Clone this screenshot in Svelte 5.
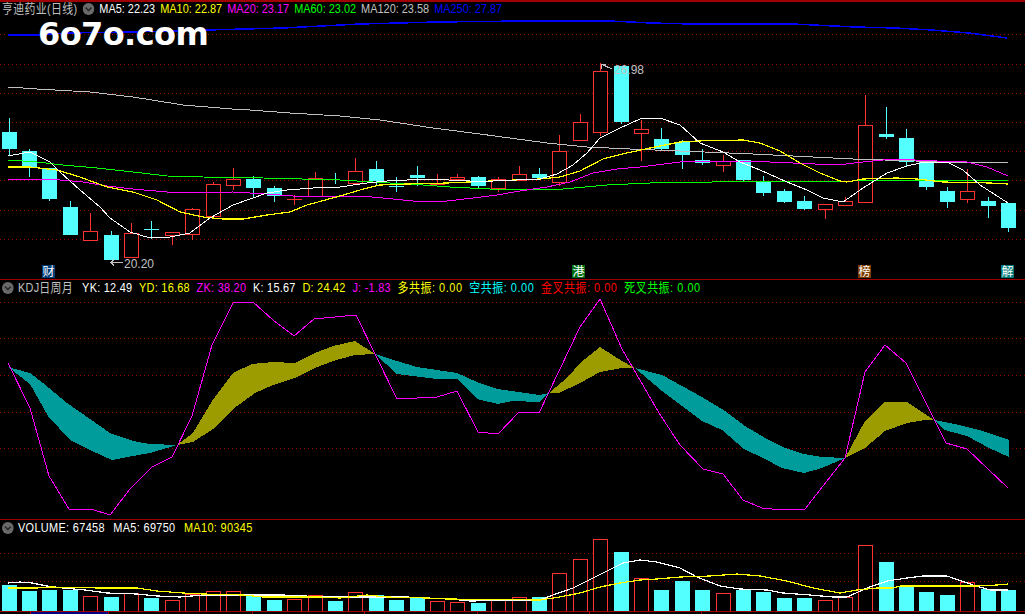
<script>
  // candles: [up, wickTop, bodyTop, bodyBottom, wickBottom]
  const candles = [
    [0, 118, 132, 149, 155], [0, 149, 151, 168, 177], [0, 168, 168, 199, 201], [0, 201, 207, 235, 235],
    [1, 213, 231, 240, 241], [0, 231, 235, 260, 260], [1, 223, 233, 257, 258], [0, 221, 229, 229, 239],
    [1, 232, 232, 235, 245], [1, 208, 209, 234, 240], [1, 182, 184, 216, 216], [1, 168, 179, 185, 190],
    [0, 176, 179, 188, 198], [0, 186, 188, 196, 202], [1, 195, 199, 199, 205], [1, 172, 178, 196, 197],
    [0, 173, 184, 184, 184], [1, 158, 171, 183, 185], [0, 161, 169, 181, 185], [0, 177, 186, 186, 192],
    [0, 166, 175, 178, 186], [1, 174, 184, 184, 185], [1, 174, 177, 179, 180], [0, 176, 177, 186, 188],
    [1, 177, 179, 188, 192], [1, 166, 174, 180, 180], [0, 168, 174, 178, 180], [1, 135, 151, 182, 186],
    [1, 114, 122, 140, 140], [1, 63, 71, 132, 136], [0, 66, 66, 122, 124], [1, 120, 129, 133, 161],
    [0, 128, 139, 149, 151], [0, 140, 142, 155, 169], [0, 149, 160, 163, 165], [1, 155, 161, 165, 172],
    [0, 160, 160, 180, 181], [0, 176, 182, 193, 196], [0, 189, 191, 202, 203], [0, 196, 201, 209, 210],
    [1, 204, 204, 209, 219], [1, 197, 201, 205, 206], [1, 95, 125, 202, 203], [0, 107, 134, 137, 139],
    [0, 129, 138, 162, 166], [0, 160, 160, 187, 190], [0, 187, 191, 202, 208], [1, 169, 191, 199, 203],
    [0, 197, 201, 206, 218], [0, 203, 203, 228, 232]
  ];

  const volumes = [
    [0, 585], [0, 591], [0, 590], [0, 590], [1, 596], [0, 597], [1, 593], [0, 598], [1, 600], [1, 594],
    [1, 591], [1, 591], [0, 595], [0, 600], [1, 599], [1, 595], [0, 601], [1, 592], [0, 595], [0, 600],
    [0, 598], [1, 601], [1, 602], [0, 603], [1, 600], [1, 597], [0, 597], [1, 573], [1, 559], [1, 539],
    [0, 552], [1, 578], [0, 590], [0, 581], [0, 590], [1, 593], [0, 590], [0, 592], [0, 598], [0, 598],
    [1, 600], [1, 597], [1, 545], [0, 562], [0, 587], [0, 592], [0, 595], [1, 582], [0, 589], [0, 590]
  ];

  const centerOf = (i) => Math.round(8.5 + 20.4 * i);

  const priceLines = [
    { color: '#c0c0c0', width: 1, points: '8,87 37,89 90,92 133,97 183,105 232,109 250,110 290,113 340,116 380,120 433,128 480,134 547,143 587,147 630,149 680,151 753,154 813,157 853,159 947,162 1008,163' },
    { color: '#0000ff', width: 1.5, points: '8,35 37,35 67,33 130,32 207,30 283,28 360,24 437,22 523,21 610,21 651,23 692,24 793,24 855,27 895,28 932,30 969,33 1007,38' },
    { color: '#00ff00', width: 1, points: '8,160 37,162 63,165 97,168 133,172 167,176 203,177 263,178 340,180 373,182 423,185 450,187 490,189 563,189 607,185 650,183 680,182 712,182 713,181 853,181 857,180 1008,180' },
    { color: '#ff00ff', width: 1, points: '8,179 33,179 60,180 83,182 107,186 133,189 167,192 200,193 233,192 267,194 293,196 360,196 383,198 413,201 447,201 473,198 497,195 520,191 547,187 570,182 593,173 617,169 640,167 680,162 690,161 747,161 793,163 837,165 863,162 893,159 937,161 967,162 987,167 1008,176' },
    { color: '#ffff00', width: 1.2, points: '8,167 30,167 57,170 80,177 107,187 133,192 157,200 180,212 203,217 223,219 243,219 267,215 290,212 307,205 340,196 360,190 380,185 407,184 447,183 490,181 540,179 560,177 580,171 603,159 627,153 650,148 680,142 697,141 743,140 760,143 780,151 800,163 820,173 840,181 847,182 863,179 897,178 917,179 943,182 990,183 1008,184' },
    { color: '#ffffff', width: 1, points: '8,156 30,152 50,162 60,172 80,190 100,207 110,218 130,232 150,238 170,237 190,233 210,218 233,205 253,198 267,193 287,190 313,188 340,187 367,183 387,181 427,179 470,181 493,181 540,179 557,174 573,165 587,153 600,138 620,128 640,119 660,118 680,125 700,143 723,152 740,162 760,170 787,182 807,190 823,198 843,202 863,188 887,173 907,166 920,163 947,162 963,170 980,185 1008,203' }
  ];

  const bands = [
    { color: '#009c9c', points: '8,367 30,373 43,383 67,403 90,419 110,433 133,441 150,444 177,445 150,453 133,456 112,460 90,450 70,440 48,416 30,384' },
    { color: '#9c9c00', points: '177,445 193,433 212,401 233,373 252,364 273,362 295,363 315,353 333,346 355,341 375,354 355,355 333,361 315,368 295,378 273,385 255,393 233,409 213,429 193,442' },
    { color: '#009c9c', points: '375,354 397,361 417,367 457,373 477,382 497,389 512,391 539,395 549,393 539,402 512,401 498,404 477,399 457,379 437,379 397,374' },
    { color: '#9c9c00', points: '549,393 569,376 580,363 600,347 622,361 635,368 622,368 600,372 580,383 559,393' },
    { color: '#009c9c', points: '635,368 662,375 682,386 702,397 725,411 745,426 765,438 785,448 804,454 822,457 845,458 822,468 804,473 782,468 765,459 744,449 722,430 702,421 682,406 662,391' },
    { color: '#9c9c00', points: '845,458 865,421 885,402 907,402 925,414 934,420 925,420 907,423 885,431 865,448' },
    { color: '#009c9c', points: '934,420 959,425 979,430 1009,440 1009,457 989,448 967,436 945,430' }
  ];

  const jLine = '8,363 30,408 49,476 69,509 91,509 110,515 130,489 152,467 172,457 192,416 212,345 233,303 253,302 273,320 294,336 314,319 356,315 397,399 437,397 457,391 478,432 498,434 519,412 539,413 580,327 600,299 622,349 659,413 680,445 703,469 723,474 743,500 762,508 782,510 805,509 845,458 865,372 885,345 906,363 946,443 967,449 1008,488';

  const volumeLines = [
    { color: '#ffffff', points: '8,583 20,582 32,583 47,586 63,588 85,590 107,593 137,594 157,596 180,597 203,595 243,595 283,595 305,596 320,597 340,597 367,597 407,597 427,598 450,599 470,601 540,600 553,595 573,588 597,576 623,563 640,560 657,562 680,568 697,577 720,586 740,589 767,590 783,593 810,595 833,597 847,597 867,588 887,581 907,578 923,576 947,576 973,585 990,590 1008,590' },
    { color: '#ffff00', points: '8,588 37,588 50,587 100,588 137,588 157,591 183,593 203,594 243,595 263,597 320,597 340,598 367,595 387,597 427,598 447,599 540,600 560,597 580,593 600,587 620,583 640,580 657,579 680,577 710,576 737,574 760,576 787,581 813,588 840,593 857,590 877,588 893,588 900,586 977,586 997,585 1008,584' }
  ];

  const markers = [
    { text: '财', x: 42, bg: '#003c78' },
    { text: '港', x: 572, bg: '#006e14' },
    { text: '榜', x: 858, bg: '#7c3c00' },
    { text: '解', x: 1001, bg: '#007878' }
  ];

  const priceGrid = [34, 64, 93, 122, 151, 180, 210, 239];
  const kdjGrid = [302, 338, 375, 412, 448];
  const volumeGrid = [553, 581];
  const ticks = [30, 108, 252, 364, 477, 589, 701];

  const priceLegend = [
    ['MA5: 22.23', '#ffffff'], ['MA10: 22.87', '#ffff00'], ['MA20: 23.17', '#ff00ff'],
    ['MA60: 23.02', '#00ff00'], ['MA120: 23.58', '#c0c0c0'], ['MA250: 27.87', '#0000ff']
  ];
  const kdjLegend = [
    ['YK: 12.49', '#ffffff'], ['YD: 16.68', '#ffff00'], ['ZK: 38.20', '#ff00ff'], ['K: 15.67', '#ffffff'],
    ['D: 24.42', '#ffff00'], ['J: -1.83', '#ff00ff']
  ];
  const resonanceLegend = [
    ['多共振: 0.00', '#ffff00'], ['空共振: 0.00', '#00ffff'], ['金叉共振: 0.00', '#ff0000'], ['死叉共振: 0.00', '#00ff00']
  ];
  const volumeLegend = [
    ['VOLUME: 67458', '#ffffff'], ['MA5: 69750', '#ffffff'], ['MA10: 90345', '#ffff00']
  ];
</script>

{#snippet toggle()}
  <svg class="toggle" width="14" height="12" viewBox="0 0 12 12" preserveAspectRatio="none">
    <circle cx="6" cy="6" r="6" fill="#6a6a6a" />
    <path d="M3 4.5 L6 7.5 L9 4.5" fill="none" stroke="#2a2a2a" stroke-width="1.6" />
  </svg>
{/snippet}

{#snippet grid(rows)}
  {#each rows as y}
    <line class="dots" x1="0" x2="1025" y1={y + 0.5} y2={y + 0.5} />
  {/each}
{/snippet}

<main class="terminal">
  <section class="panel price">
    <svg class="plot" viewBox="0 2 1025 277" width="1025" height="277">
      {@render grid(priceGrid)}
      {#each candles as [up, wickTop, bodyTop, bodyBottom, wickBottom], i}
        {@const cx = centerOf(i)}
        {@const color = up ? '#ff3232' : '#54ffff'}
        <line x1={cx + 0.5} x2={cx + 0.5} y1={wickTop} y2={bodyTop} stroke={color} />
        <line x1={cx + 0.5} x2={cx + 0.5} y1={bodyBottom} y2={wickBottom} stroke={color} />
        {#if bodyTop === bodyBottom}
          {#if i !== 16}
            <line x1={cx - 7} x2={cx + 8} y1={bodyTop + 0.5} y2={bodyTop + 0.5} stroke={color} />
          {/if}
        {:else if up}
          <rect x={cx - 6.5} y={bodyTop + 0.5} width="14" height={bodyBottom - bodyTop} fill="#000" stroke={color} />
        {:else}
          <rect x={cx - 7} y={bodyTop} width="15" height={bodyBottom - bodyTop} fill={color} />
        {/if}
      {/each}
      {#each priceLines as line}
        <polyline points={line.points} fill="none" stroke={line.color} stroke-width={line.width} />
      {/each}
      <path class="arrow" d="M123 262.5 H111 M114 259.5 L111 262.5 L114 265.5" />
      <text class="extreme" x="124" y="268">20.20</text>
      <path class="arrow" d="M612 69 L601 64 M601 64 H606 M601 64 V69" />
      <text class="extreme" x="614" y="74">26.98</text>
      {#each markers as m}
        <rect x={m.x} y="265" width="13" height="13" fill={m.bg} />
        <text class="marker" x={m.x + 0.5} y="276">{m.text}</text>
      {/each}
    </svg>
    <header class="legend">
      <span class="title name">亨迪药业(日线)</span>
      {@render toggle()}
      {#each priceLegend as [label, color]}
        <span style:color>{label}</span>
      {/each}
    </header>
    <div class="watermark">6o7o.com</div>
  </section>

  <section class="panel kdj">
    <svg class="plot" viewBox="0 280 1025 239" width="1025" height="239">
      {@render grid(kdjGrid)}
      {#each bands as band}
        <polygon points={band.points} fill={band.color} />
      {/each}
      <polyline points={jLine} fill="none" stroke="#ff00ff" />
    </svg>
    <header class="legend">
      {@render toggle()}
      <span class="title">KDJ日周月</span>
      {#each kdjLegend as [label, color]}
        <span style:color>{label}</span>
      {/each}
      {#each resonanceLegend as [label, color]}
        <span class="resonance" style:color>{label}</span>
      {/each}
    </header>
  </section>

  <section class="panel volume">
    <svg class="plot" viewBox="0 520 1025 94" width="1025" height="94">
      {@render grid(volumeGrid)}
      {#each volumes as [up, top], i}
        {@const cx = centerOf(i)}
        {#if up}
          <rect x={cx - 6.5} y={top + 0.5} width="14" height={611 - top} fill="#000" stroke="#ff3232" />
        {:else}
          <rect x={cx - 7} y={top} width="15" height={611 - top} fill="#54ffff" />
        {/if}
      {/each}
      {#each volumeLines as line}
        <polyline points={line.points} fill="none" stroke={line.color} stroke-width="1.2" />
      {/each}
      <line class="axis" x1="0" x2="1025" y1="611.5" y2="611.5" />
      <rect x="31" y="612" width="77" height="2" fill="#000080" />
      {#each ticks as x}
        <line class="axis" x1={x + 0.5} x2={x + 0.5} y1="612" y2="614" />
      {/each}
    </svg>
    <header class="legend">
      {@render toggle()}
      {#each volumeLegend as [label, color]}
        <span style:color>{label}</span>
      {/each}
    </header>
  </section>
</main>

<style>
  :global(body) {
    margin: 0;
    background: #000;
  }

  .terminal {
    width: 1025px;
    height: 614px;
    overflow: hidden;
    display: flex;
    flex-direction: column;
    background: #000;
    font-family: "Liberation Sans", "Noto Sans CJK SC", sans-serif;
  }

  .panel {
    position: relative;
    border-top: 1px solid #a00000;
  }

  .price {
    border-top-width: 2px;
  }

  .plot {
    display: block;
    shape-rendering: crispEdges;
  }

  /* the terminal's font is narrower than Arial, so squeeze it */
  .legend {
    position: absolute;
    top: 1px;
    left: 2px;
    display: flex;
    align-items: center;
    gap: 6px;
    font-size: 13px;
    line-height: 14px;
    white-space: nowrap;
    transform: scaleX(0.84);
    transform-origin: left center;
  }

  .price .legend {
    top: 0;
  }

  .kdj .legend {
    gap: 8px;
    letter-spacing: 0.3px;
  }

  .kdj .toggle {
    margin-right: -3px;
  }

  .kdj .title {
    margin-right: 3px;
  }

  .kdj .resonance {
    letter-spacing: 0.65px;
  }

  .volume .legend {
    gap: 10px;
    letter-spacing: 0.4px;
  }

  .volume .toggle {
    margin-right: -5px;
  }

  .title {
    color: #c0c0c0;
  }

  .name {
    letter-spacing: 0.4px;
  }

  .toggle {
    flex: none;
  }

  .dots {
    stroke: #a00000;
    stroke-dasharray: 1 3;
    shape-rendering: auto;
  }

  .axis {
    stroke: #a00000;
  }

  .arrow {
    fill: none;
    stroke: #c0c0c0;
  }

  .extreme {
    fill: #c0c0c0;
    font-size: 12px;
  }

  .marker {
    fill: #fff;
    font-size: 12px;
  }

  .watermark {
    position: absolute;
    top: 13px;
    left: 38px;
    color: #fff;
    font-family: "DejaVu Sans", sans-serif;
    font-weight: 700;
    font-size: 32px;
    line-height: 38px;
    letter-spacing: -0.6px;
  }
</style>
